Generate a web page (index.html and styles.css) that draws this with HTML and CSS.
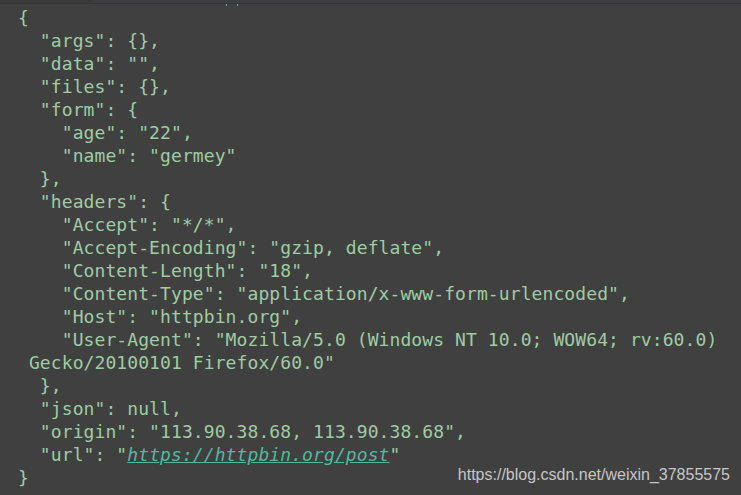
FILE: index.html
```html
<!DOCTYPE html>
<html>
<head>
<meta charset="utf-8">
<link rel="stylesheet" href="styles.css">
</head>
<body>
<div class="topbar"><div class="tb-left"></div><div class="tb-right"><i class="tb-mark"></i><i class="tb-mark tb-mark2"></i></div></div>
<pre class="code">{
  "args": {},
  "data": "",
  "files": {},
  "form": {
    "age": "22",
    "name": "germey"
  },
  "headers": {
    "Accept": "*/*",
    "Accept-Encoding": "gzip, deflate",
    "Content-Length": "18",
    "Content-Type": "application/x-www-form-urlencoded",
    "Host": "httpbin.org",
    "User-Agent": "Mozilla/5.0 (Windows NT 10.0; WOW64; rv:60.0)
 Gecko/20100101 Firefox/60.0"
  },
  "json": null,
  "origin": "113.90.38.68, 113.90.38.68",
  "url": "<a class="link" href="#">https://httpbin.org/post</a>"
}</pre>
<div class="watermark">https://blog.csdn.net/weixin_37855575</div>
</body>
</html>
```
FILE: styles.css
```css
html, body {
  margin: 0;
  padding: 0;
  background: #404040;
  height: 100%;
  overflow: hidden;
}
body {
  position: relative;
}
.topbar {
  display: flex;
  height: 3px;
  border-bottom: 1px solid #343638;
}
.tb-left {
  width: 92px;
  background: #3a3a3a;
}
.tb-right {
  flex: 1;
  background: #3c3f42;
  position: relative;
}
.tb-mark {
  position: absolute;
  left: 134px;
  top: 4px;
  width: 1px;
  height: 2px;
  background: #7f9a85;
}
.tb-mark2 {
  left: 145px;
}
.code {
  margin: 2px 0 0 0;
  padding: 0 0 0 18px;
  font-family: "DejaVu Sans Mono", monospace;
  font-size: 18px;
  line-height: 23px;
  letter-spacing: 0.09px;
  color: #9fcca4;
  white-space: pre;
}
.link {
  color: #52b9a0;
  font-style: italic;
  text-decoration: underline;
}
.watermark {
  position: absolute;
  right: 11px;
  bottom: 11px;
  font-family: "Liberation Sans", Arial, sans-serif;
  font-size: 16px;
  color: #c6c6c6;
}
```
